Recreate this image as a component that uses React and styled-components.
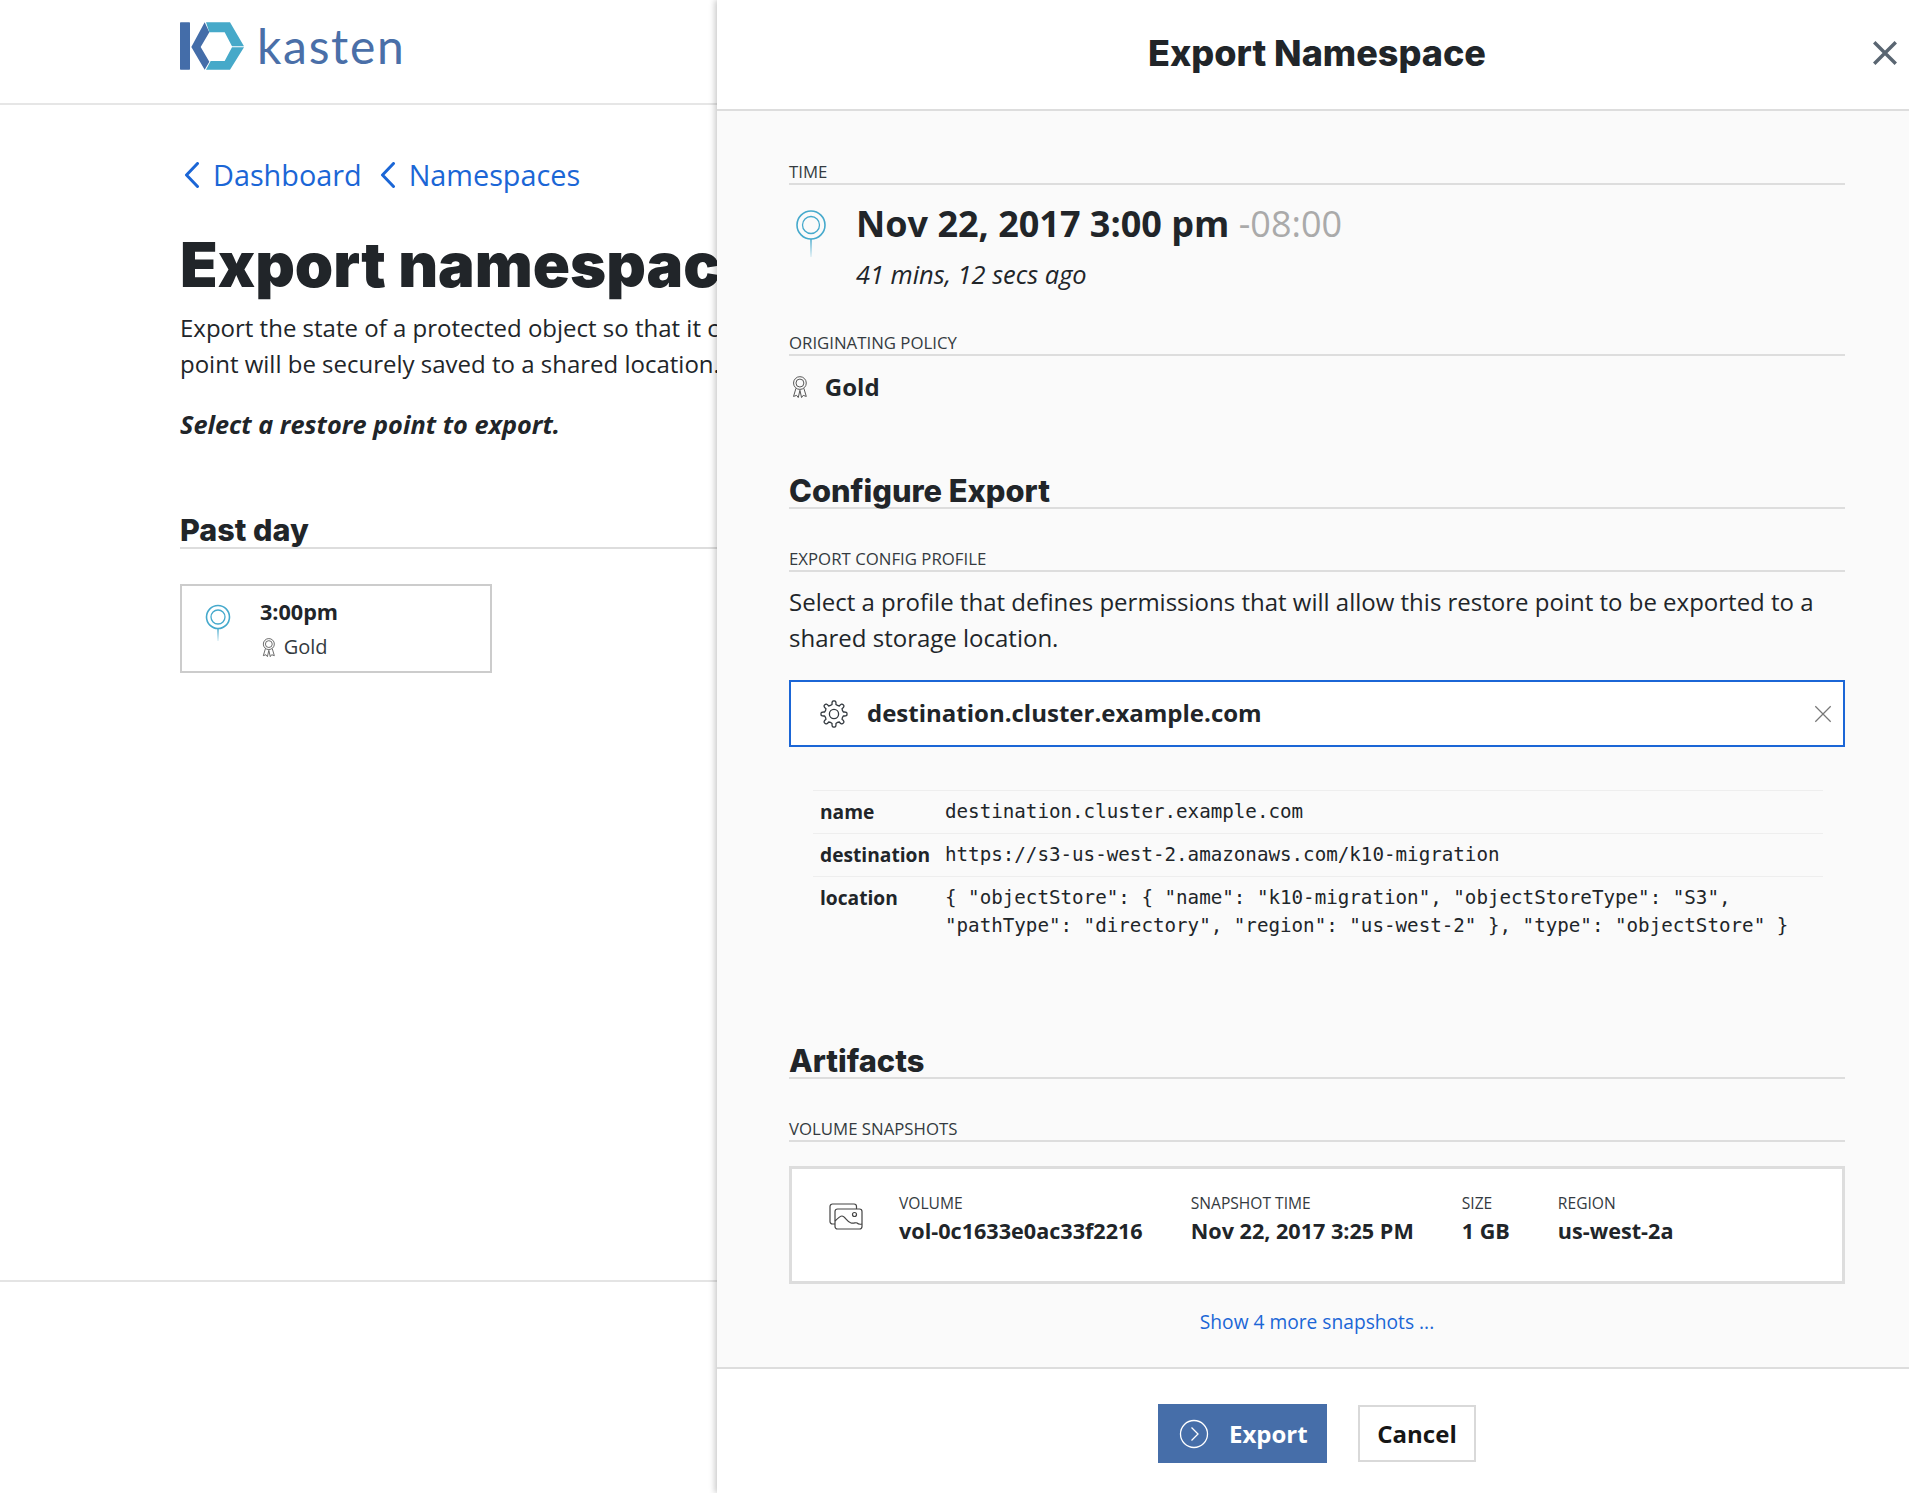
import React from "react";
import styled, { createGlobalStyle } from "styled-components";

const Global = createGlobalStyle`
  html, body { margin: 0; padding: 0; background: #fff; }
  body { font-family: "Open Sans", "Liberation Sans", sans-serif; color: #212529; }
  * { box-sizing: border-box; }
`;
const heading = `"Inter", "Liberation Sans", sans-serif`;

const Page = styled.div`position: relative; width: 1909px; height: 1493px; overflow: hidden;`;
const TopBar = styled.header`height: 105px; border-bottom: 2px solid #e6e6e6; padding: 21px 0 0 180px;`;
const LogoWrap = styled.div`display: flex; align-items: flex-start; gap: 9px;`;
const LogoMark = styled.svg`width: 68px; height: 50px; display: block;`;
const LogoText = styled.span`font-family: "Lato", sans-serif; font-weight: 400; font-size: 48px; line-height: 50px; letter-spacing: 1.7px; color: #4a6fa8;`;
const Main = styled.main`padding: 50px 0 0 180px; height: 1177px; border-bottom: 2px solid #e4e4e4; width: 760px; overflow: hidden;`;
const Crumbs = styled.nav`display: flex; align-items: center; gap: 18px; height: 40px; padding-left: 4px;`;
const Crumb = styled.a`display: flex; align-items: center; gap: 13px; color: #1b66d6; font-size: 28.8px; line-height: 40px;`;
const Title = styled.h1`font-family: ${heading}; font-weight: 900; font-size: 61.5px; line-height: 76px; margin: 32px 0 0; white-space: nowrap; color: #212529;`;
const Lead = styled.p`font-size: 24px; line-height: 36px; margin: 7px 0 0; white-space: nowrap;`;
const Prompt = styled.p`font-size: 25.3px; line-height: 36px; font-weight: 700; font-style: italic; margin: 24px 0 0;`;
const DayHead = styled.h3`font-family: ${heading}; font-weight: 800; font-size: 30.5px; line-height: 34px; margin: 71px 0 0; border-bottom: 2px solid #ddd; width: 760px;`;
const PointCard = styled.div`margin-top: 35px; width: 312px; height: 89px; border: 2px solid #ccc; padding: 11px 0 0 23px; display: flex; background: #fff;`;
const PinSlot = styled.div`padding-top: 7px;`;
const PointBody = styled.div`margin-left: 29px;`;
const PointTime = styled.div`font-size: 21.6px; font-weight: 700; line-height: 30px;`;
const PointPolicy = styled.div`display: flex; align-items: center; gap: 8px; font-size: 20px; line-height: 30px; margin-top: 5px; padding-left: 2px; color: #343a40;`;

const Drawer = styled.aside`position: absolute; top: 0; right: 0; bottom: 0; width: 1192px; background: #fafafa; box-shadow: -2px 0 6px rgba(0,0,0,.22); display: flex; flex-direction: column;`;
const DrawerHead = styled.div`position: relative; height: 111px; background: #fff; border-bottom: 2px solid #ddd; display: flex; align-items: center; justify-content: center; padding: 0 0 4px 8px;`;
const DrawerTitle = styled.h2`font-family: ${heading}; font-weight: 800; font-size: 36px; margin: 0; color: #212529;`;
const CloseBtn = styled.button`position: absolute; top: 39px; right: 10px; width: 28px; height: 28px; padding: 0; border: 0; background: none; color: #5a6672;`;
const DrawerBody = styled.div`flex: 1; padding: 49px 64px 0 72px;`;
const FieldLabel = styled.div`font-size: 16.8px; line-height: 23px; height: 25px; color: #343a40; border-bottom: 2px solid #ddd; margin-top: ${p => p.$top || 0}px;`;
const TimeRow = styled.div`display: flex; margin-top: 14px;`;
const PinCol = styled.div`width: 67px; padding-left: 6px; padding-top: 10px;`;
const TimeMain = styled.div`font-size: 36px; line-height: 50px; font-weight: 700;`;
const Offset = styled.span`font-weight: 400; color: #aaa;`;
const TimeAgo = styled.div`font-size: 25.4px; line-height: 36px; font-style: italic; margin-top: 7px;`;
const PolicyRow = styled.div`display: flex; align-items: center; gap: 17px; font-size: 24px; font-weight: 700; line-height: 36px; margin-top: 13px; padding-left: 3px;`;
const SectionHead = styled.h3`font-family: ${heading}; font-weight: 800; font-size: 30.8px; line-height: 37px; height: 37px; margin: ${p => p.$top}px 0 0; border-bottom: 2px solid #ddd; color: #212529;`;
const Text = styled.p`font-size: 24px; line-height: 36px; margin: 12px 0 0;`;
const SelectBox = styled.div`margin-top: 24px; height: 67px; border: 2px solid #1b66d6; background: #fff; display: flex; align-items: center; padding: 0 10px 0 29px; gap: 19px; font-size: 24px; font-weight: 700;`;
const SelectValue = styled.span`flex: 1; padding-bottom: 2px;`;
const DetailTable = styled.div`margin: 43px 22px 0 24px;`;
const DetailRow = styled.div`display: flex; border-top: 1px solid #eee; padding: 7px 0 0 7px; height: ${p => p.$tall ? 64 : 43}px;`;
const DetailKey = styled.div`width: 125px; flex: none; font-size: 19.2px; font-weight: 700; line-height: 28px;`;
const DetailVal = styled.div`font-family: "DejaVu Sans Mono", "Liberation Mono", monospace; font-size: 19.2px; line-height: 28px; color: #212529;`;
const VolumeCard = styled.div`margin-top: 24px; height: 118px; border: 3px solid #ddd; background: #fff; padding: 22px 0 0 37px; display: flex;`;
const VolumeIcon = styled.div`width: 70px; flex: none; padding-top: 11px;`;
const VolumeCols = styled.div`display: flex; gap: 48px;`;
const ColLabel = styled.div`font-size: 15.6px; line-height: 24px; color: #343a40;`;
const ColValue = styled.div`font-size: 21.6px; font-weight: 700; line-height: 30px; margin-top: 1px;`;
const MoreLink = styled.a`display: block; text-align: center; margin-top: 23px; font-size: 19.2px; line-height: 30px; color: #1b66d6;`;
const DrawerFoot = styled.div`height: 126px; background: #fff; border-top: 2px solid #ddd; display: flex; justify-content: center; align-items: flex-start; gap: 31px; padding: 35px 0 0 8px;`;
const PrimaryBtn = styled.button`width: 169px; height: 59px; background: #466ea9; border: 0; color: #fff; font: 700 24px "Open Sans", sans-serif; display: flex; align-items: center; padding: 0 0 0 21px; gap: 20px;`;
const GhostBtn = styled.button`width: 118px; height: 57px; margin-top: 1px; background: #fff; border: 2px solid #d9d9d9; color: #161616; font: 700 24px "Open Sans", sans-serif; padding: 0;`;

const Chevron = () => (
  <svg width="16" height="26" viewBox="0 0 16 26" fill="none"><path d="M13.5 1.5 2.5 13l11 11.5" stroke="#1b66d6" strokeWidth="3" strokeLinecap="round" strokeLinejoin="round"/></svg>
);

const Pin = ({ big }) => {
  const id = big ? "pinBig" : "pinSmall";
  const w = big ? 32 : 26, h = big ? 48 : 37;
  const c = w / 2, r = big ? 14 : 11.5, ir = big ? 8.5 : 7;
  return (
    <svg width={w} height={h} viewBox={`0 0 ${w} ${h}`} fill="none">
      <defs><linearGradient id={id} x1="0" y1="0" x2="0" y2="1"><stop offset="0" stopColor="#45a9cc"/><stop offset="1" stopColor="#45a9cc" stopOpacity=".15"/></linearGradient></defs>
      <circle cx={c} cy={c} r={r} stroke="#45a9cc" strokeWidth="1.6"/>
      <circle cx={c} cy={c} r={ir} stroke="#45a9cc" strokeWidth="1.3"/>
      <rect x={c - 0.75} y={c + r} width="1.5" height={h - c - r} fill={`url(#${id})`}/>
    </svg>
  );
};

const Award = ({ size = 20 }) => (
  <svg width={size * 0.72} height={size} viewBox="0 0 14.4 20" fill="none" stroke="#555" strokeWidth=".9">
    <circle cx="7.2" cy="6.4" r="5.8"/><circle cx="7.2" cy="6.4" r="3.6"/>
    <path d="M3.6 11.2 1.4 18.6l2.8-1 1.5 2L7.2 13l1.5 6.6 1.5-2 2.8 1-2.2-7.4"/>
  </svg>
);

const gearPath = (() => {
  const teeth = 8, cx = 14, cy = 14, ro = 13, ri = 9.6;
  const pt = (r, a) => `${(cx + r * Math.cos(a)).toFixed(2)} ${(cy + r * Math.sin(a)).toFixed(2)}`;
  let d = "";
  for (let i = 0; i < teeth; i++) {
    const s = (i / teeth) * Math.PI * 2 - Math.PI / 2;
    const st = Math.PI * 2 / teeth;
    d += `${i ? "L" : "M"}${pt(ri, s - st * 0.26)} `;
    d += `Q${pt(ro * 1.05, s - st * 0.22)} ${pt(ro, s)} Q${pt(ro * 1.05, s + st * 0.22)} ${pt(ri, s + st * 0.26)} `;
    d += `Q${pt(ri * .92, s + st * 0.5)} ${pt(ri, s + st * 0.74)} `;
  }
  return d + "Z";
})();
const Gear = () => (
  <svg width="28" height="28" viewBox="0 0 28 28" fill="none" stroke="#343a40" strokeWidth="1.3" strokeLinejoin="round">
    <path d={gearPath}/><circle cx="14" cy="14" r="4.6"/>
  </svg>
);

const Images = () => (
  <svg width="34" height="28" viewBox="0 0 34 28" fill="none" stroke="#444" strokeWidth="1.2">
    <path d="M6 22H3.5A2.5 2.5 0 0 1 1 19.5v-15A2.5 2.5 0 0 1 3.5 2H25a2.5 2.5 0 0 1 2.5 2.5V7"/>
    <rect x="6" y="7" width="27" height="20" rx="2.5"/>
    <circle cx="25.5" cy="12.5" r="2"/>
    <path d="M6 19c3-3 5-5 7-5 3 0 5 6 9 7 3 .8 5-1 6 0 1 1 3 1.5 5 1"/>
  </svg>
);

const X = ({ w = 2.6, color = "currentColor", size = 26 }) => (
  <svg width={size} height={size} viewBox="0 0 26 26" fill="none" stroke={color} strokeWidth={w}><path d="M3 3l20 20M23 3 3 23"/></svg>
);

const Logo = () => (
  <LogoWrap>
    <LogoMark viewBox="90 62 204 150">
      <rect x="90" y="66" width="30" height="142" rx="2" fill="#446da9"/>
      <path d="M164 66l14 30-26 44 26 44-14 24-40-68z" fill="#446da9"/>
      <path d="M168 66h72l42 72h-36l-22-42h-46z" fill="#46a9c9"/>
      <path d="M282 141l-42 67h-72l14-26h42l22-41z" fill="#46a9c9"/>
    </LogoMark>
    <LogoText>kasten</LogoText>
  </LogoWrap>
);

const Volume = [
  ["VOLUME", "vol-0c1633e0ac33f2216"],
  ["SNAPSHOT TIME", "Nov 22, 2017 3:25 PM"],
  ["SIZE", "1 GB"],
  ["REGION", "us-west-2a"],
];

export default function App() {
  return (
    <Page>
      <Global />
      <TopBar><Logo /></TopBar>
      <Main>
        <Crumbs>
          <Crumb><Chevron />Dashboard</Crumb>
          <Crumb><Chevron />Namespaces</Crumb>
        </Crumbs>
        <Title>Export namespace</Title>
        <Lead>Export the state of a protected object so that it can be imported elsewhere. The restore<br />point will be securely saved to a shared location.</Lead>
        <Prompt>Select a restore point to export.</Prompt>
        <DayHead>Past day</DayHead>
        <PointCard>
          <PinSlot><Pin /></PinSlot>
          <PointBody>
            <PointTime>3:00pm</PointTime>
            <PointPolicy><Award size={19} />Gold</PointPolicy>
          </PointBody>
        </PointCard>
      </Main>
      <Drawer>
        <DrawerHead>
          <DrawerTitle>Export Namespace</DrawerTitle>
          <CloseBtn aria-label="Close"><X w={3.2} size={28} /></CloseBtn>
        </DrawerHead>
        <DrawerBody>
          <FieldLabel>TIME</FieldLabel>
          <TimeRow>
            <PinCol><Pin big /></PinCol>
            <div>
              <TimeMain>Nov 22, 2017 3:00 pm <Offset>-08:00</Offset></TimeMain>
              <TimeAgo>41 mins, 12 secs ago</TimeAgo>
            </div>
          </TimeRow>
          <FieldLabel $top={39}>ORIGINATING POLICY</FieldLabel>
          <PolicyRow><Award size={22} />Gold</PolicyRow>
          <SectionHead $top={67}>Configure Export</SectionHead>
          <FieldLabel $top={38}>EXPORT CONFIG PROFILE</FieldLabel>
          <Text>Select a profile that defines permissions that will allow this restore point to be exported to a shared storage location.</Text>
          <SelectBox>
            <Gear />
            <SelectValue>destination.cluster.example.com</SelectValue>
            <X w={1.6} color="#777" size={20} />
          </SelectBox>
          <DetailTable>
            <DetailRow><DetailKey>name</DetailKey><DetailVal>destination.cluster.example.com</DetailVal></DetailRow>
            <DetailRow><DetailKey>destination</DetailKey><DetailVal>https://s3-us-west-2.amazonaws.com/k10-migration</DetailVal></DetailRow>
            <DetailRow $tall><DetailKey>location</DetailKey><DetailVal>{'{ "objectStore": { "name": "k10-migration", "objectStoreType": "S3", "pathType": "directory", "region": "us-west-2" }, "type": "objectStore" }'}</DetailVal></DetailRow>
          </DetailTable>
          <SectionHead $top={102}>Artifacts</SectionHead>
          <FieldLabel $top={38}>VOLUME SNAPSHOTS</FieldLabel>
          <VolumeCard>
            <VolumeIcon><Images /></VolumeIcon>
            <VolumeCols>
              {Volume.map(([k, v]) => (
                <div key={k}><ColLabel>{k}</ColLabel><ColValue>{v}</ColValue></div>
              ))}
            </VolumeCols>
          </VolumeCard>
          <MoreLink>Show 4 more snapshots ...</MoreLink>
        </DrawerBody>
        <DrawerFoot>
          <PrimaryBtn>
            <svg width="30" height="30" viewBox="0 0 30 30" fill="none" stroke="#fff" strokeWidth="1.3"><circle cx="15" cy="15" r="13.5"/><path d="M12.5 8.5 19 15l-6.5 6.5"/></svg>
            Export
          </PrimaryBtn>
          <GhostBtn>Cancel</GhostBtn>
        </DrawerFoot>
      </Drawer>
    </Page>
  );
}
